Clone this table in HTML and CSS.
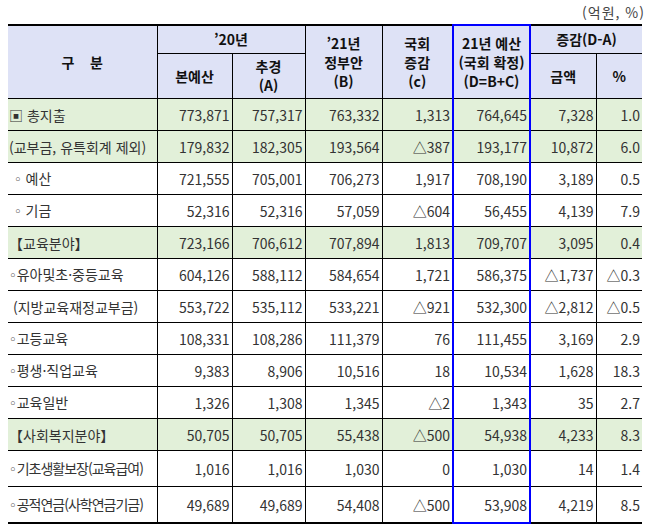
FILE: index.html
```html
<!DOCTYPE html>
<html lang="ko">
<head>
<meta charset="utf-8">
<link rel="stylesheet" href="styles.css">
</head>
<body>
<div class="page">
  <div class="unit">(억원, %)</div>
  <table class="budget">
    <colgroup>
      <col class="c-name"><col class="c-n1"><col class="c-n2"><col class="c-n3"><col class="c-n4"><col class="c-n5"><col class="c-n6"><col class="c-n7">
    </colgroup>
    <thead>
      <tr class="h1">
        <th rowspan="2" class="spaced">구&nbsp;&nbsp;&nbsp;&nbsp;분</th>
        <th colspan="2">’20년</th>
        <th rowspan="2">’21년<br>정부안<br>(B)</th>
        <th rowspan="2">국회<br>증감<br>(c)</th>
        <th rowspan="2" class="blue">21년 예산<br>(국회 확정)<br>(D=B+C)</th>
        <th colspan="2">증감(D-A)</th>
      </tr>
      <tr class="h2">
        <th>본예산</th>
        <th>추경<br>(A)</th>
        <th>금액</th>
        <th>%</th>
      </tr>
    </thead>
    <tbody>
      <tr class="green dotted"><td class="name">▣ 총지출</td><td>773,871</td><td>757,317</td><td>763,332</td><td>1,313</td><td class="blue">764,645</td><td>7,328</td><td>1.0</td></tr>
      <tr class="green"><td class="name">(교부금, 유특회계 제외)</td><td>179,832</td><td>182,305</td><td>193,564</td><td>△387</td><td class="blue">193,177</td><td>10,872</td><td>6.0</td></tr>
      <tr><td class="name"><span class="dot ind">◦</span> 예산</td><td>721,555</td><td>705,001</td><td>706,273</td><td>1,917</td><td class="blue">708,190</td><td>3,189</td><td>0.5</td></tr>
      <tr><td class="name"><span class="dot ind">◦</span> 기금</td><td>52,316</td><td>52,316</td><td>57,059</td><td>△604</td><td class="blue">56,455</td><td>4,139</td><td>7.9</td></tr>
      <tr class="green"><td class="name">【교육분야】</td><td>723,166</td><td>706,612</td><td>707,894</td><td>1,813</td><td class="blue">709,707</td><td>3,095</td><td>0.4</td></tr>
      <tr class="dotted"><td class="name"><span class="dot">◦</span>유아및초·중등교육</td><td>604,126</td><td>588,112</td><td>584,654</td><td>1,721</td><td class="blue">586,375</td><td>△1,737</td><td>△0.3</td></tr>
      <tr><td class="name">&nbsp;(지방교육재정교부금)</td><td>553,722</td><td>535,112</td><td>533,221</td><td>△921</td><td class="blue">532,300</td><td>△2,812</td><td>△0.5</td></tr>
      <tr><td class="name"><span class="dot">◦</span>고등교육</td><td>108,331</td><td>108,286</td><td>111,379</td><td>76</td><td class="blue">111,455</td><td>3,169</td><td>2.9</td></tr>
      <tr><td class="name"><span class="dot">◦</span>평생·직업교육</td><td>9,383</td><td>8,906</td><td>10,516</td><td>18</td><td class="blue">10,534</td><td>1,628</td><td>18.3</td></tr>
      <tr><td class="name"><span class="dot">◦</span>교육일반</td><td>1,326</td><td>1,308</td><td>1,345</td><td>△2</td><td class="blue">1,343</td><td>35</td><td>2.7</td></tr>
      <tr class="green"><td class="name">【사회복지분야】</td><td>50,705</td><td>50,705</td><td>55,438</td><td>△500</td><td class="blue">54,938</td><td>4,233</td><td>8.3</td></tr>
      <tr class="tall"><td class="name tight"><span class="dot">◦</span>기초생활보장(교육급여)</td><td>1,016</td><td>1,016</td><td>1,030</td><td>0</td><td class="blue">1,030</td><td>14</td><td>1.4</td></tr>
      <tr class="tall last"><td class="name tight"><span class="dot">◦</span>공적연금(사학연금기금)</td><td>49,689</td><td>49,689</td><td>54,408</td><td>△500</td><td class="blue">53,908</td><td>4,219</td><td>8.5</td></tr>
    </tbody>
  </table>
</div>
</body>
</html>
```

FILE: styles.css
```css
html, body {
  margin: 0;
  padding: 0;
  background: #ffffff;
  overflow: hidden;
}

.page {
  width: 645px;
  padding-left: 8px;
  box-sizing: border-box;
  font-family: "Noto Sans CJK KR", "Noto Sans", sans-serif;
  color: #333333;
}

.unit {
  height: 24px;
  line-height: 24px;
  text-align: right;
  font-size: 14px;
  letter-spacing: 1px;
  color: #444444;
  width: 637px;
}

.budget {
  border-collapse: collapse;
  table-layout: fixed;
  width: 634px;
  border-top: 2px solid #000000;
  border-bottom: 2px solid #000000;
  font-size: 14px;
}

.c-name { width: 149px; }
.c-n1 { width: 75px; }
.c-n2 { width: 73px; }
.c-n3 { width: 77px; }
.c-n4 { width: 71px; }
.c-n5 { width: 77px; }
.c-n6 { width: 66px; }
.c-n7 { width: 46px; }

.budget th,
.budget td {
  border: 1px solid #000000;
  padding: 0 2px;
  overflow: hidden;
  white-space: nowrap;
}

.budget th:first-child,
.budget td:first-child {
  border-left: none;
}

.budget tr > :last-child {
  border-right: none;
}

.budget th {
  background: #dee2f6;
  color: #111111;
  font-weight: bold;
  line-height: 19px;
  text-align: center;
  font-size: 14px;
}

.budget .h1 th {
  height: 27px;
}

.budget .h2 th {
  height: 44px;
}

.budget td {
  height: 31px;
  text-align: right;
  line-height: 18px;
}

.budget td.name {
  text-align: left;
  padding-left: 1px;
}

.budget td.tight {
  letter-spacing: -1px;
}

.dot {
  font-family: "DejaVu Sans", sans-serif;
  font-size: 13px;
  letter-spacing: 0;
}

.dot.ind {
  margin-left: 5px;
}

.budget tr.green td {
  background: #e2f0d9;
}

.budget tr.dotted td {
  border-bottom: 1px dotted #000000;
}

.budget tr.tall td {
  height: 35px;
}

.budget .blue {
  border-left: 2px solid #0000ff;
  border-right: 2px solid #0000ff;
}

.budget th.blue {
  border-top: 2px solid #0000ff;
}

.budget tr.last td.blue {
  border-bottom: 2px solid #0000ff;
}
```
